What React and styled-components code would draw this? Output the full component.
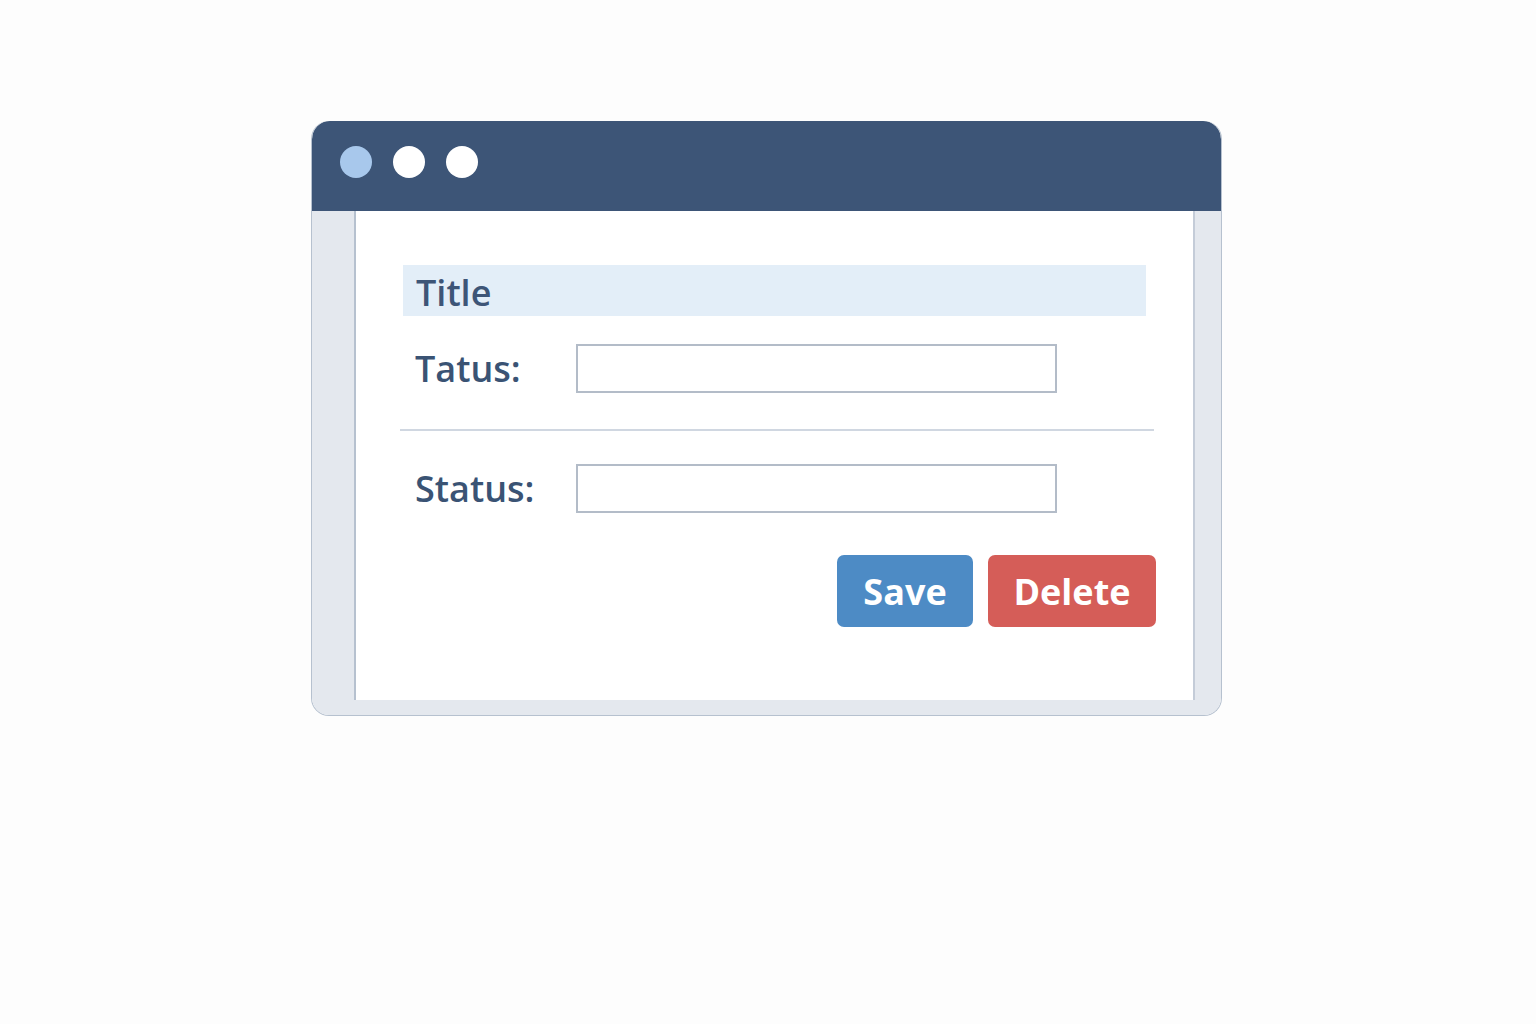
import React from 'react';
import styled, { createGlobalStyle } from 'styled-components';

const GlobalStyle = createGlobalStyle`
  html, body {
    margin: 0;
    padding: 0;
    background: #fdfdfd;
  }
  body {
    font-family: "Open Sans", "Noto Sans", sans-serif;
  }
`;

const Page = styled.div`
  width: 1536px;
  height: 1024px;
  padding: 121px 0 0 311px;
  box-sizing: border-box;
`;

const Window = styled.div`
  width: 911px;
  border-radius: 18px;
  overflow: hidden;
  border: 1px solid #b6c1cf;
  border-top: none;
  box-sizing: border-box;
  display: flex;
  flex-direction: column;
`;

const TitleBar = styled.div`
  height: 90px;
  background: #3d5577;
  display: flex;
  align-items: center;
  gap: 21px;
  padding: 0 0 8px 28px;
  box-sizing: border-box;
  border-radius: 18px 18px 0 0;
`;

const Dot = styled.span`
  width: 32px;
  height: 32px;
  border-radius: 50%;
  background: ${(p) => (p.$active ? '#a8c8ec' : '#ffffff')};
`;

const Frame = styled.div`
  background: #e4e8ee;
  padding: 0 26px 15px 42px;
  display: flex;
`;

const Panel = styled.div`
  flex: 1;
  height: 489px;
  background: #ffffff;
  border-left: 2px solid #b6c1cf;
  border-right: 2px solid #c4ccd8;
  box-sizing: border-box;
  padding: 54px 47px 0 47px;
  display: flex;
  flex-direction: column;
`;

const Heading = styled.div`
  height: 51px;
  background: #e3eef8;
  color: #3d5577;
  font-size: 36px;
  font-weight: 600;
  padding: 4px 0 0 13px;
  display: flex;
  align-items: center;
  box-sizing: border-box;
`;

const Row = styled.div`
  display: flex;
  align-items: center;
  margin-top: ${(p) => p.$top}px;
  padding-left: 12px;
`;

const Label = styled.label`
  width: 161px;
  color: #3a5374;
  font-size: 36px;
  font-weight: 600;
`;

const Field = styled.div`
  width: 481px;
  height: 49px;
  border: 2px solid #b3bcc8;
  box-sizing: border-box;
  background: #ffffff;
`;

const Divider = styled.hr`
  border: none;
  height: 2px;
  background: #d0d7e1;
  margin: 36px -8px 0 -3px;
`;

const Actions = styled.div`
  display: flex;
  justify-content: flex-end;
  gap: 15px;
  margin: 42px -10px 0 0;
`;

const Button = styled.button`
  height: 72px;
  width: ${(p) => p.$w}px;
  border: none;
  border-radius: 7px;
  background: ${(p) => p.$bg};
  color: #ffffff;
  font-family: "Open Sans", "Noto Sans", sans-serif;
  font-size: 36px;
  font-weight: 700;
  padding: 0;
`;

export default function App() {
  return (
    <>
      <GlobalStyle />
      <Page>
        <Window>
          <TitleBar>
            <Dot $active />
            <Dot />
            <Dot />
          </TitleBar>
          <Frame>
            <Panel>
              <Heading>Title</Heading>
              <Row $top={28}>
                <Label>Tatus:</Label>
                <Field />
              </Row>
              <Divider />
              <Row $top={33}>
                <Label>Status:</Label>
                <Field />
              </Row>
              <Actions>
                <Button $w={136} $bg="#4d8bc5">Save</Button>
                <Button $w={168} $bg="#d55d58">Delete</Button>
              </Actions>
            </Panel>
          </Frame>
        </Window>
      </Page>
    </>
  );
}
